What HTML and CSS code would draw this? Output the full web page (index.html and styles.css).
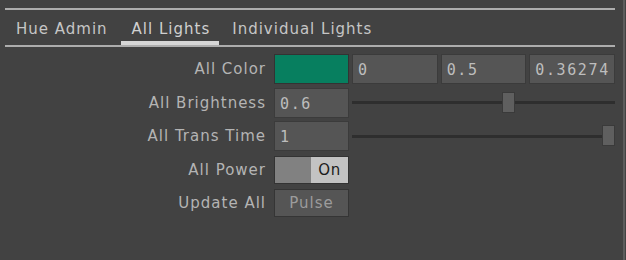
FILE: index.html
```html
<!DOCTYPE html>
<html lang="en">
<head>
    <meta charset="UTF-8">
    <title>Hue parameters</title>
    <link rel="stylesheet" href="styles.css">
</head>
<body>
    <div class="panel">
        <div class="page">
            <div class="tabs">
                <div class="tab">Hue Admin</div>
                <div class="tab active">All Lights</div>
                <div class="tab">Individual Lights</div>
            </div>

            <div class="params">
                <div class="param">
                    <div class="label">All Color</div>
                    <div class="value swatch"></div>
                    <div class="rest">
                        <div class="field">0</div>
                        <div class="field">0.5</div>
                        <div class="field">0.36274</div>
                    </div>
                </div>

                <div class="param">
                    <div class="label">All Brightness</div>
                    <div class="value field">0.6</div>
                    <div class="rest slider">
                        <div class="track"></div>
                        <div class="thumb" style="left: calc((100% - 13px) * 0.6)"></div>
                    </div>
                </div>

                <div class="param">
                    <div class="label">All Trans Time</div>
                    <div class="value field">1</div>
                    <div class="rest slider">
                        <div class="track"></div>
                        <div class="thumb" style="left: calc((100% - 13px) * 1)"></div>
                    </div>
                </div>

                <div class="param">
                    <div class="label">All Power</div>
                    <div class="value toggle">
                        <span class="toggle-off"></span>
                        <span class="toggle-on">On</span>
                    </div>
                </div>

                <div class="param">
                    <div class="label">Update All</div>
                    <div class="value button">Pulse</div>
                </div>
            </div>
        </div>
    </div>
</body>
</html>
```

FILE: styles.css
```css
body {
    margin: 0;
    background-color: #424242;
    font-family: "DejaVu Sans", Verdana, sans-serif;
    color: #b6b6b6;
}
.panel {
    width: 623px;
    height: 260px;
    border-right: 2px solid #5c5c5c;
}
.page {
    width: 610px;
    margin-left: 5px;
    padding-top: 8px;
}
.tabs {
    display: flex;
    gap: 2px;
    height: 35px;
    border-top: 2px solid #adadad;
    border-bottom: 2px solid #adadad;
}
.tab {
    padding: 10px 11px 0;
    font-size: 15px;
    letter-spacing: 1px;
    color: #c6c6c6;
    box-sizing: border-box;
    height: 35px;
}
.tab.active {
    padding-right: 9px;
    border-bottom: 4px solid #d6d6d6;
    color: #d0d0d0;
}
.params {
    display: flex;
    flex-direction: column;
    gap: 3.5px;
    margin-top: 7px;
}
.param {
    display: flex;
    align-items: center;
    height: 30px;
}
.label {
    width: 261px;
    margin-right: 8px;
    text-align: right;
    font-size: 15px;
    letter-spacing: 1px;
    color: #b4b4b4;
}
.value {
    width: 75px;
    height: 30px;
    box-sizing: border-box;
}
.rest {
    flex: 1;
    display: flex;
    gap: 3px;
    margin-left: 3px;
    height: 30px;
}
.field {
    flex: 1;
    box-sizing: border-box;
    height: 30px;
    padding: 6px 0 0 5px;
    background-color: #555555;
    border: 1px solid #3b3b3b;
    font-family: "DejaVu Sans Mono", monospace;
    font-size: 15px;
    letter-spacing: 1.6px;
    color: #bdbdbd;
}
.value.field {
    flex: none;
}
.swatch {
    background-color: #077f5f;
    border: 1px solid #333;
}
.slider {
    position: relative;
    align-items: center;
}
.track {
    width: 100%;
    height: 3px;
    background-color: #2e2e2e;
}
.thumb {
    position: absolute;
    top: 4px;
    width: 13px;
    height: 21px;
    box-sizing: border-box;
    background-color: #5f5f5f;
    border: 1px solid #3a3a3a;
}
.toggle {
    display: flex;
    height: 28px;
    border: 1px solid #333;
}
.toggle-off {
    width: 36px;
    background-color: #818181;
}
.toggle-on {
    flex: 1;
    background-color: #c3c3c3;
    color: #1b1b1b;
    font-size: 15px;
    letter-spacing: 0.6px;
    text-align: center;
    line-height: 26px;
}
.button {
    height: 28px;
    background-color: #555555;
    border: 1px solid #353535;
    text-align: center;
    font-size: 15px;
    letter-spacing: 1px;
    line-height: 26px;
    color: #9c9c9c;
}
```
